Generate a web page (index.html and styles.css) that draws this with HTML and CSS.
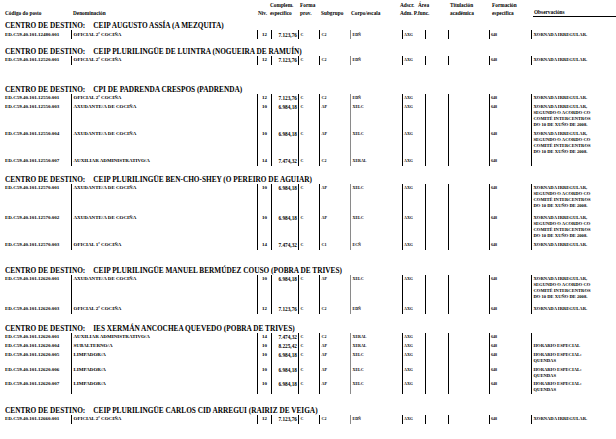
FILE: index.html
```html
<!DOCTYPE html>
<html lang="gl">
<head>
<meta charset="utf-8">
<title>Postos</title>
<link rel="stylesheet" href="styles.css">
</head>
<body>
<div class="page">
  <div class="hdr">
    <div class="h">Código do posto</div>
    <div class="h">Denominación</div>
    <div class="h">Niv.</div>
    <div class="h">Complem.<br>específico</div>
    <div class="h">Forma<br>prov.</div>
    <div class="h">Subgrupo</div>
    <div class="h">Corpo/escala</div>
    <div class="h">Adscr.<br>Adm. P.</div>
    <div class="h">Área<br>func.</div>
    <div class="h">Titulación<br>académica</div>
    <div class="h">Formación<br>específica</div>
    <div class="h hobs">Observacións</div>
  </div>

  <section class="sec s1">
    <h2 class="dest"><span class="lbl">CENTRO DE DESTINO:</span><span>CEIP AUGUSTO ASSÍA (A MEZQUITA)</span></h2>
    <div class="row">
      <div class="c code">ED.C59.40.101.12480.001</div><div class="c den">OFICIAL 2ª COCIÑA</div><div class="c niv">12</div><div class="c cmp">7.123,76</div><div class="c sm frm">C</div><div class="c sm sub">C2</div><div class="c sm cor">EDÑ</div><div class="c sm ads">AXG</div><div class="c are"></div><div class="c tit"></div><div class="c sm fes">648</div><div class="c obs">XORNADA IRREGULAR.</div>
    </div>
  </section>

  <section class="sec s2">
    <h2 class="dest"><span class="lbl">CENTRO DE DESTINO:</span><span>CEIP PLURILINGÜE DE LUINTRA (NOGUEIRA DE RAMUÍN)</span></h2>
    <div class="row">
      <div class="c code">ED.C59.40.101.12520.001</div><div class="c den">OFICIAL 2ª COCIÑA</div><div class="c niv">12</div><div class="c cmp">7.123,76</div><div class="c sm frm">C</div><div class="c sm sub">C2</div><div class="c sm cor">EDÑ</div><div class="c sm ads">AXG</div><div class="c are"></div><div class="c tit"></div><div class="c sm fes">648</div><div class="c obs">XORNADA IRREGULAR.</div>
    </div>
  </section>

  <section class="sec s3">
    <h2 class="dest"><span class="lbl">CENTRO DE DESTINO:</span><span>CPI DE PADRENDA CRESPOS (PADRENDA)</span></h2>
    <div class="row">
      <div class="c code">ED.C59.40.101.12550.001</div><div class="c den">OFICIAL 2ª COCIÑA</div><div class="c niv">12</div><div class="c cmp">7.123,76</div><div class="c sm frm">C</div><div class="c sm sub">C2</div><div class="c sm cor">EDÑ</div><div class="c sm ads">AXG</div><div class="c are"></div><div class="c tit"></div><div class="c sm fes">648</div><div class="c obs">XORNADA IRREGULAR.</div>
    </div>
    <div class="row">
      <div class="c code">ED.C59.40.101.12550.003</div><div class="c den">AXUDANTE/A DE COCIÑA</div><div class="c niv">10</div><div class="c cmp">6.984,18</div><div class="c sm frm">C</div><div class="c sm sub">AP</div><div class="c sm cor">XELC</div><div class="c sm ads">AXG</div><div class="c are"></div><div class="c tit"></div><div class="c sm fes">648</div><div class="c obs">XORNADA IRREGULAR,<br>SEGUNDO O ACORDO CO<br>COMITÉ INTERCENTROS<br>DO 10 DE XUÑO DE 2008.</div>
    </div>
    <div class="row">
      <div class="c code">ED.C59.40.101.12550.004</div><div class="c den">AXUDANTE/A DE COCIÑA</div><div class="c niv">10</div><div class="c cmp">6.984,18</div><div class="c sm frm">C</div><div class="c sm sub">AP</div><div class="c sm cor">XELC</div><div class="c sm ads">AXG</div><div class="c are"></div><div class="c tit"></div><div class="c sm fes">648</div><div class="c obs">XORNADA IRREGULAR,<br>SEGUNDO O ACORDO CO<br>COMITÉ INTERCENTROS<br>DO 10 DE XUÑO DE 2008.</div>
    </div>
    <div class="row">
      <div class="c code">ED.C59.40.101.12550.007</div><div class="c den">AUXILIAR ADMINISTRATIVO/A</div><div class="c niv">14</div><div class="c cmp">7.474,32</div><div class="c sm frm">C</div><div class="c sm sub">C2</div><div class="c sm cor">XERAL</div><div class="c sm ads">AXG</div><div class="c are"></div><div class="c tit"></div><div class="c sm fes">648</div><div class="c obs"></div>
    </div>
  </section>

  <section class="sec s4">
    <h2 class="dest"><span class="lbl">CENTRO DE DESTINO:</span><span>CEIP PLURILINGÜE BEN-CHO-SHEY (O PEREIRO DE AGUIAR)</span></h2>
    <div class="row tall">
      <div class="c code">ED.C59.40.101.12570.001</div><div class="c den">AXUDANTE/A DE COCIÑA</div><div class="c niv">10</div><div class="c cmp">6.984,18</div><div class="c sm frm">C</div><div class="c sm sub">AP</div><div class="c sm cor">XELC</div><div class="c sm ads">AXG</div><div class="c are"></div><div class="c tit"></div><div class="c sm fes">648</div><div class="c obs">XORNADA IRREGULAR,<br>SEGUNDO O ACORDO CO<br>COMITÉ INTERCENTROS<br>DO 10 DE XUÑO DE 2008.</div>
    </div>
    <div class="row">
      <div class="c code">ED.C59.40.101.12570.002</div><div class="c den">AXUDANTE/A DE COCIÑA</div><div class="c niv">10</div><div class="c cmp">6.984,18</div><div class="c sm frm">C</div><div class="c sm sub">AP</div><div class="c sm cor">XELC</div><div class="c sm ads">AXG</div><div class="c are"></div><div class="c tit"></div><div class="c sm fes">648</div><div class="c obs">XORNADA IRREGULAR,<br>SEGUNDO O ACORDO CO<br>COMITÉ INTERCENTROS<br>DO 10 DE XUÑO DE 2008.</div>
    </div>
    <div class="row">
      <div class="c code">ED.C59.40.101.12570.003</div><div class="c den">OFICIAL 1ª COCIÑA</div><div class="c niv">14</div><div class="c cmp">7.474,32</div><div class="c sm frm">C</div><div class="c sm sub">C1</div><div class="c sm cor">ECÑ</div><div class="c sm ads">AXG</div><div class="c are"></div><div class="c tit"></div><div class="c sm fes">648</div><div class="c obs">XORNADA IRREGULAR.</div>
    </div>
  </section>

  <section class="sec s5">
    <h2 class="dest"><span class="lbl">CENTRO DE DESTINO:</span><span>CEIP PLURILINGÜE MANUEL BERMÚDEZ COUSO (POBRA DE TRIVES)</span></h2>
    <div class="row tall">
      <div class="c code">ED.C59.40.101.12620.001</div><div class="c den">AXUDANTE/A DE COCIÑA</div><div class="c niv">10</div><div class="c cmp">6.984,18</div><div class="c sm frm">C</div><div class="c sm sub">AP</div><div class="c sm cor">XELC</div><div class="c sm ads">AXG</div><div class="c are"></div><div class="c tit"></div><div class="c sm fes">648</div><div class="c obs">XORNADA IRREGULAR,<br>SEGUNDO O ACORDO CO<br>COMITÉ INTERCENTROS<br>DO 10 DE XUÑO DE 2008.</div>
    </div>
    <div class="row">
      <div class="c code">ED.C59.40.101.12620.003</div><div class="c den">OFICIAL 2ª COCIÑA</div><div class="c niv">12</div><div class="c cmp">7.123,76</div><div class="c sm frm">C</div><div class="c sm sub">C2</div><div class="c sm cor">EDÑ</div><div class="c sm ads">AXG</div><div class="c are"></div><div class="c tit"></div><div class="c sm fes">648</div><div class="c obs">XORNADA IRREGULAR.</div>
    </div>
  </section>

  <section class="sec s6">
    <h2 class="dest"><span class="lbl">CENTRO DE DESTINO:</span><span>IES XERMÁN ANCOCHEA QUEVEDO (POBRA DE TRIVES)</span></h2>
    <div class="row">
      <div class="c code">ED.C59.40.101.12620.001</div><div class="c den">AUXILIAR ADMINISTRATIVO/A</div><div class="c niv">14</div><div class="c cmp">7.474,32</div><div class="c sm frm">C</div><div class="c sm sub">C2</div><div class="c sm cor">XERAL</div><div class="c sm ads">AXG</div><div class="c are"></div><div class="c tit"></div><div class="c sm fes">648</div><div class="c obs"></div>
    </div>
    <div class="row">
      <div class="c code">ED.C59.40.101.12620.004</div><div class="c den">SUBALTERNO/A</div><div class="c niv">10</div><div class="c cmp">8.225,42</div><div class="c sm frm">C</div><div class="c sm sub">AP</div><div class="c sm cor">XERAL</div><div class="c sm ads">AXG</div><div class="c are"></div><div class="c tit"></div><div class="c sm fes">648</div><div class="c obs">HORARIO ESPECIAL</div>
    </div>
    <div class="row two">
      <div class="c code">ED.C59.40.101.12620.005</div><div class="c den">LIMPADOR/A</div><div class="c niv">10</div><div class="c cmp">6.984,18</div><div class="c sm frm">C</div><div class="c sm sub">AP</div><div class="c sm cor">XELC</div><div class="c sm ads">AXG</div><div class="c are"></div><div class="c tit"></div><div class="c sm fes">648</div><div class="c obs">HORARIO ESPECIAL:<br>QUENDAS</div>
    </div>
    <div class="row two">
      <div class="c code">ED.C59.40.101.12620.006</div><div class="c den">LIMPADOR/A</div><div class="c niv">10</div><div class="c cmp">6.984,18</div><div class="c sm frm">C</div><div class="c sm sub">AP</div><div class="c sm cor">XELC</div><div class="c sm ads">AXG</div><div class="c are"></div><div class="c tit"></div><div class="c sm fes">648</div><div class="c obs">HORARIO ESPECIAL:<br>QUENDAS</div>
    </div>
    <div class="row two">
      <div class="c code">ED.C59.40.101.12620.007</div><div class="c den">LIMPADOR/A</div><div class="c niv">10</div><div class="c cmp">6.984,18</div><div class="c sm frm">C</div><div class="c sm sub">AP</div><div class="c sm cor">XELC</div><div class="c sm ads">AXG</div><div class="c are"></div><div class="c tit"></div><div class="c sm fes">648</div><div class="c obs">HORARIO ESPECIAL:<br>QUENDAS</div>
    </div>
  </section>

  <section class="sec s7">
    <h2 class="dest"><span class="lbl">CENTRO DE DESTINO:</span><span>CEIP PLURILINGÜE CARLOS CID ARREGUI (RAIRIZ DE VEIGA)</span></h2>
    <div class="row">
      <div class="c code">ED.C59.40.101.12660.001</div><div class="c den">OFICIAL 2ª COCIÑA</div><div class="c niv">12</div><div class="c cmp">7.123,76</div><div class="c sm frm">C</div><div class="c sm sub">C2</div><div class="c sm cor">EDÑ</div><div class="c sm ads">AXG</div><div class="c are"></div><div class="c tit"></div><div class="c sm fes">648</div><div class="c obs">XORNADA IRREGULAR.</div>
    </div>
  </section>
</div>
</body>
</html>
```

FILE: styles.css
```css
html, body {
  margin: 0;
  padding: 0;
  background: #ffffff;
}

body {
  width: 616px;
  height: 439px;
  overflow: hidden;
  font-family: "Liberation Serif", "Times New Roman", serif;
  font-weight: bold;
  color: #000000;
}

.page {
  padding-left: 5px;
}

/* column header */
.hdr {
  display: grid;
  grid-template-columns: 68px 185px 12px 30px 21px 30px 49px 18px 32px 42px 42px 1fr;
  align-items: end;
  padding-top: 0.5px;
  font-size: 5.3px;
  line-height: 8px;
  margin-bottom: 4.5px;
}

.h {
  white-space: nowrap;
}

.hobs {
  border-bottom: 1px solid #000000;
  margin-left: -1px;
  padding-left: 1px;
}

/* section heading */
.sec {
  margin: 0;
}

.dest {
  margin: 0;
  display: flex;
  gap: 8px;
  font-size: 7.3px;
  line-height: 9px;
  font-weight: bold;
  white-space: nowrap;
}

.s2 .dest { margin-top: 7.5px; }
.s3 .dest { margin-top: 20px; }
.s4 .dest { margin-top: 9px; }
.s5 .dest { margin-top: 16px; }
.s6 .dest { margin-top: 10px; }
.s7 .dest { margin-top: 11.5px; }

/* data rows */
.row {
  display: grid;
  grid-template-columns: 66px 186px 14px 27px 21px 31px 52px 23px 23px 41px 42px 1fr;
  line-height: 6px;
}

.row.tall .c {
  padding-bottom: 4.5px;
}

.row.two .c {
  padding-bottom: 1px;
}

.c {
  box-sizing: border-box;
  padding-top: 1.5px;
  padding-bottom: 1.5px;
  font-size: 5px;
  white-space: nowrap;
}

.c.sm {
  font-size: 4px;
}

.den {
  border-left: 1px solid #000000;
  padding-left: 1.5px;
}

.niv {
  border-left: 1px solid #000000;
  text-align: center;
}

.cmp {
  border-left: 1px solid #000000;
  text-align: right;
  padding-right: 1px;
  font-size: 5.3px;
}

.frm {
  border-left: 1px solid #000000;
  padding-left: 1.5px;
}

.sub {
  border-left: 1px solid #000000;
  padding-left: 1.5px;
}

.cor {
  border-left: 1.5px solid #8a8a8a;
  padding-left: 1.5px;
}

.ads {
  border-left: 1px solid #000000;
  padding-left: 1px;
}

.are,
.tit {
  border-left: 1px solid #000000;
}

.fes {
  border-left: 1px solid #000000;
  padding-left: 1px;
}

.obs {
  border-left: 1.3px solid #000000;
  padding-left: 1.5px;
  font-size: 4.6px;
}
```
